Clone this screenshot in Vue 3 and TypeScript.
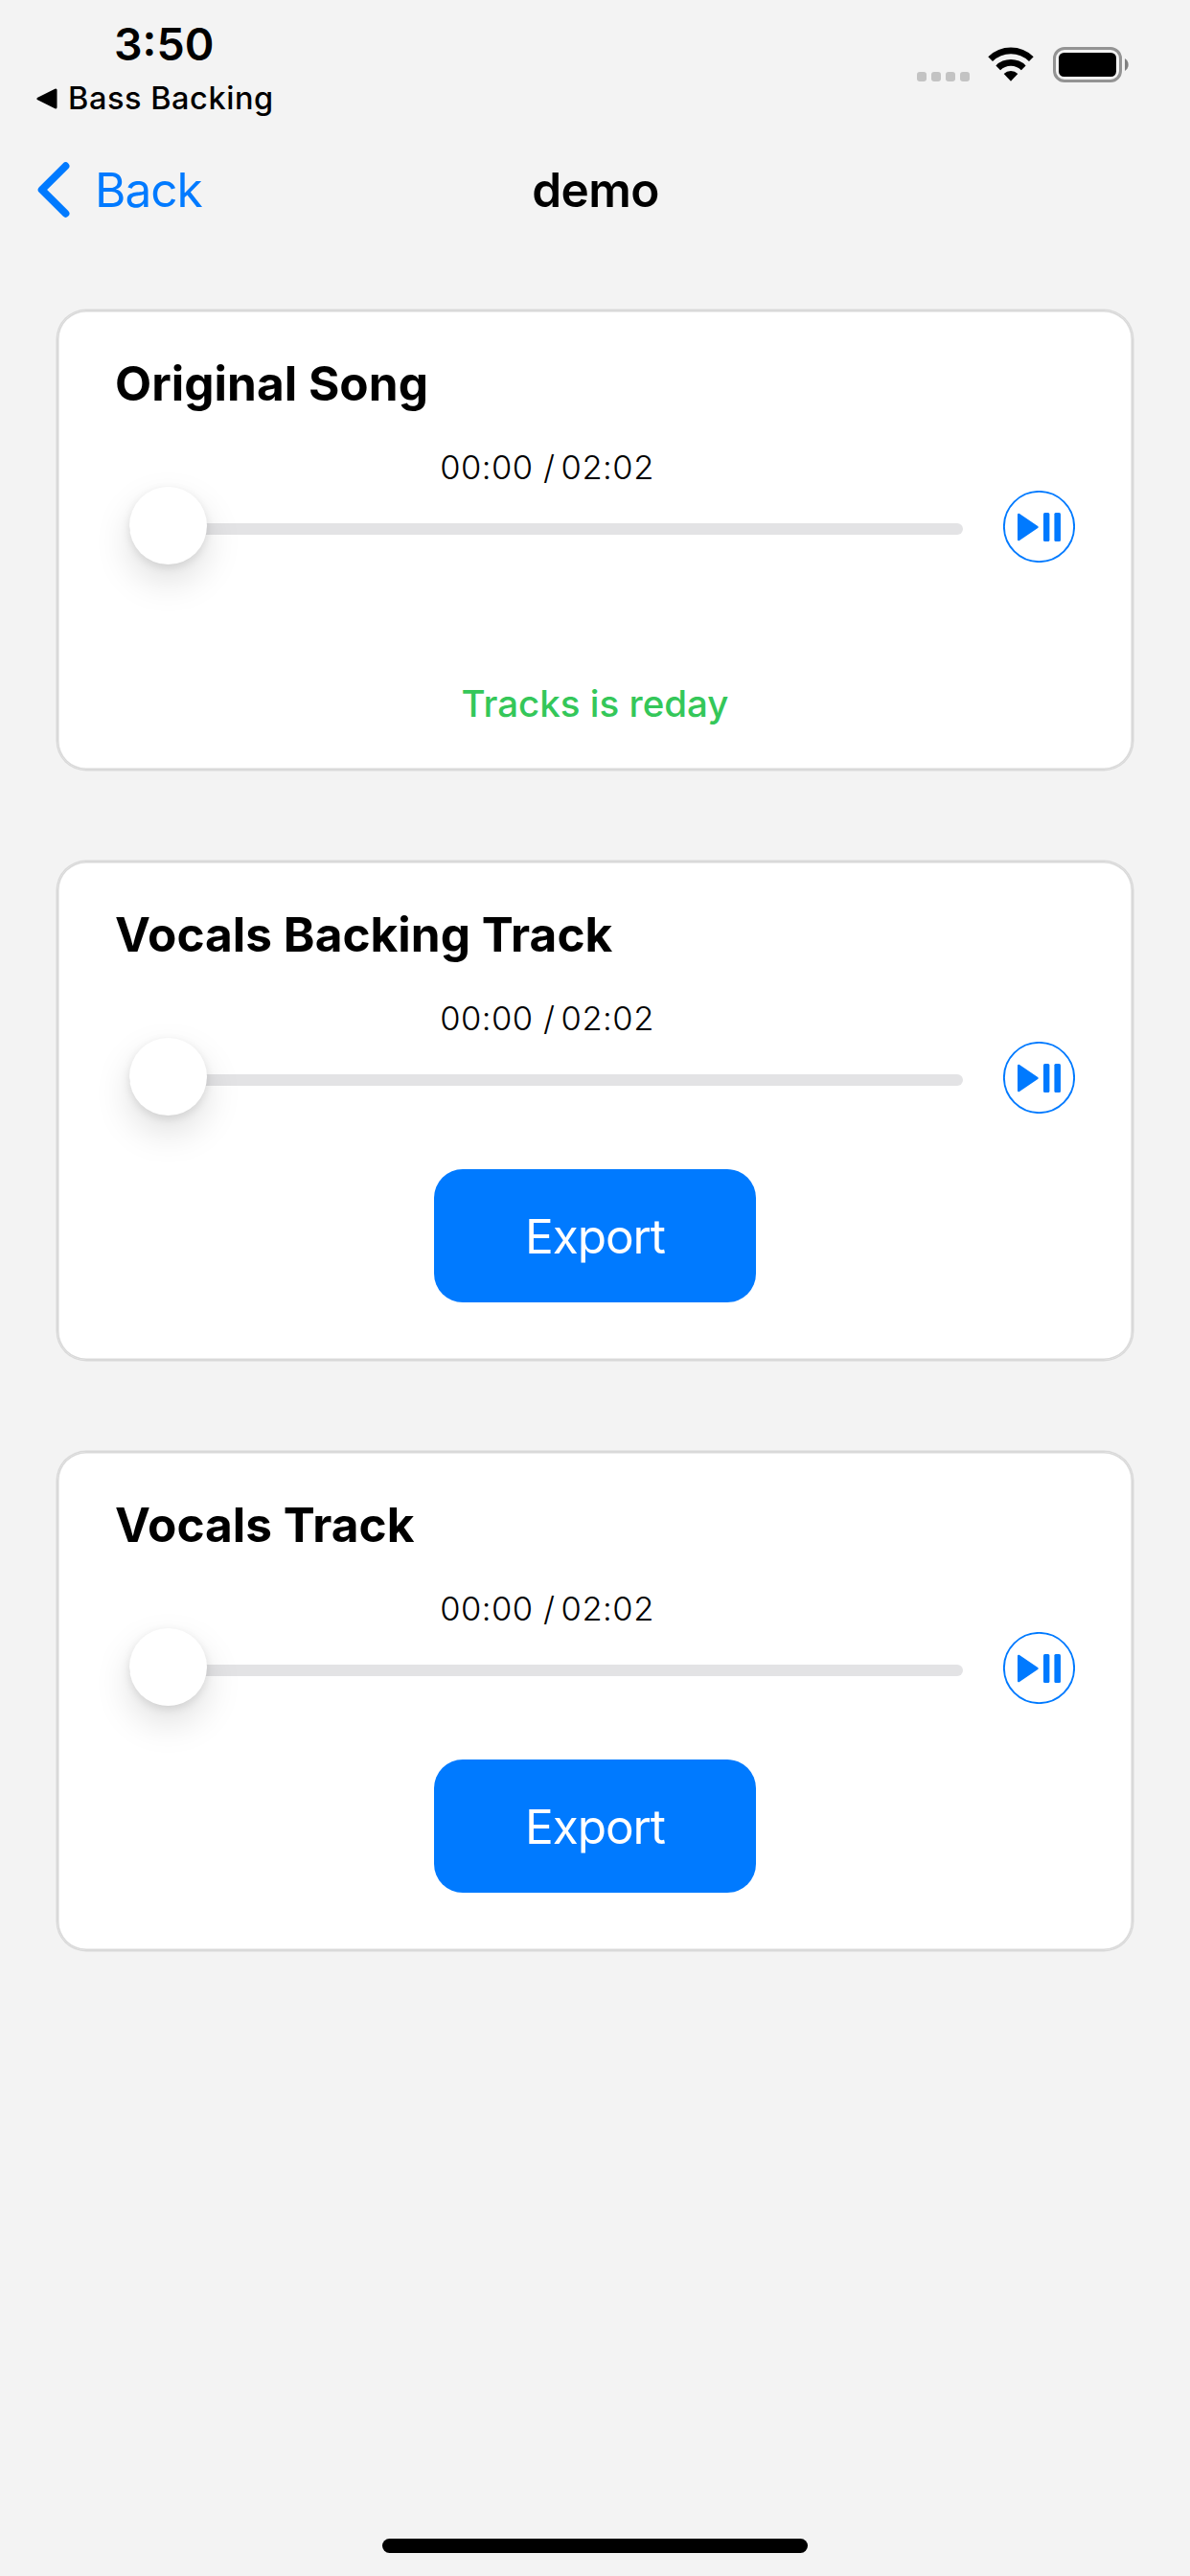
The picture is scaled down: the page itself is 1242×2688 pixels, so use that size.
<script setup lang="ts">
interface Track {
  title: string
  elapsed: string
  duration: string
  status?: string
}

const tracks: Track[] = [
  { title: 'Original Song', elapsed: '00:00', duration: '02:02', status: 'Tracks is reday' },
  { title: 'Vocals Backing Track', elapsed: '00:00', duration: '02:02' },
  { title: 'Vocals Track', elapsed: '00:00', duration: '02:02' },
]
</script>

<template>
  <div class="screen">
    <header class="status-bar">
      <div class="status-left">
        <div class="clock">3:50</div>
        <div class="return-app">
          <svg width="22" height="22" viewBox="0 0 22 22">
            <path d="M2 11 L20 2 V20 Z" stroke="#000" stroke-width="3" stroke-linejoin="round" />
          </svg>
          <span>Bass Backing</span>
        </div>
      </div>
      <div class="status-right">
        <div class="signal"><i v-for="n in 4" :key="n"></i></div>
        <svg class="wifi" width="48" height="36" viewBox="0 0 48 36">
          <path d="M0.3 10.2 A34 34 0 0 1 47.7 10.2 L43 15 A27.3 27.3 0 0 0 5 15 Z" />
          <path d="M8.4 19.4 A22 22 0 0 1 39.6 19.4 L34.9 24.2 A15.4 15.4 0 0 0 13.1 24.2 Z" />
          <path d="M16.7 28.1 A10.4 10.4 0 0 1 31.3 28.1 L24 35.8 Z" />
        </svg>
        <svg width="80" height="38" viewBox="0 0 80 38">
          <rect x="1.5" y="1.5" width="69" height="34" rx="10.5" fill="none" stroke="#939393" stroke-width="3" />
          <rect x="6" y="6" width="60" height="25" rx="5.5" />
          <path d="M75 12 A7.6 7.6 0 0 1 75 25 Z" fill="#808080" />
        </svg>
      </div>
    </header>

    <nav class="nav-bar">
      <a class="back">
        <svg width="34" height="58" viewBox="0 0 34 58">
          <path d="M29.5 4.2 L4.6 29 L29.5 53.8" fill="none" stroke="#007aff" stroke-width="7.8" stroke-linecap="round" stroke-linejoin="round" />
        </svg>
        <span>Back</span>
      </a>
      <h1>demo</h1>
      <span></span>
    </nav>

    <main>
      <section v-for="track in tracks" :key="track.title" class="card" :class="{ compact: track.status }">
        <h2>{{ track.title }}</h2>
        <div class="player">
          <div class="progress">
            <div class="time">{{ track.elapsed }} <span class="slash">/</span> {{ track.duration }}</div>
            <div class="slider">
              <div class="rail"></div>
              <div class="knob"></div>
            </div>
          </div>
          <svg class="toggle" width="75" height="75" viewBox="0 0 75 75">
            <circle cx="37.5" cy="37.5" r="36.6" fill="none" stroke="#007aff" stroke-width="1.9" />
            <path d="M16.3 25 L35.4 38 L16.3 51 Z" fill="#007aff" stroke="#007aff" stroke-width="2.6" stroke-linejoin="round" />
            <rect x="42" y="23" width="6.4" height="30" rx="1.5" fill="#007aff" />
            <rect x="53.4" y="23" width="6.6" height="30" rx="1.5" fill="#007aff" />
          </svg>
        </div>
        <p v-if="track.status" class="ready">{{ track.status }}</p>
        <button v-else class="export"><span>Export</span></button>
      </section>
    </main>

    <footer><div class="home-indicator"></div></footer>
  </div>
</template>

<style>
body {
  margin: 0;
  background: #f3f3f3;
}
</style>

<style scoped>
.screen {
  width: 1242px;
  height: 2688px;
  display: flex;
  flex-direction: column;
  background: #f3f3f3;
  color: #000;
  font-family: Inter, "Liberation Sans", sans-serif;
  overflow: hidden;
}
.status-bar {
  height: 132px;
  display: flex;
  justify-content: space-between;
}
.status-left {
  width: 360px;
}
.clock {
  margin: 16px 0 0 119px;
  font-size: 46.5px;
  line-height: 60px;
  font-weight: 600;
}
.return-app {
  display: flex;
  align-items: center;
  gap: 11px;
  margin: 6px 0 0 38px;
  height: 41px;
  font-size: 32.5px;
  line-height: 41px;
  font-weight: 500;
  letter-spacing: 0.55px;
  white-space: nowrap;
}
.status-right {
  display: flex;
  align-items: flex-start;
  padding: 49px 63px 0 0;
}
.signal {
  display: flex;
  gap: 5px;
  margin: 26px 19px 0 0;
}
.signal i {
  width: 10px;
  height: 10px;
  border-radius: 3px;
  background: #c3c3c3;
}
.wifi {
  margin-right: 20px;
}
.nav-bar {
  height: 132px;
  display: grid;
  grid-template-columns: 1fr auto 1fr;
  align-items: center;
}
.back {
  display: flex;
  align-items: center;
  gap: 26px;
  padding-left: 39px;
  color: #007aff;
  font-size: 49.5px;
  line-height: 60px;
  letter-spacing: -1px;
}
h1 {
  margin: 0;
  padding-left: 1px;
  font-size: 49.5px;
  line-height: 60px;
  font-weight: 600;
  letter-spacing: -0.6px;
}
main {
  flex: 1;
  display: flex;
  flex-direction: column;
  gap: 96px;
  padding: 60px 60px 0;
}
.card {
  box-sizing: border-box;
  height: 520px;
  padding: 46px 60px 0;
  border-radius: 30px;
  background: #fff;
  box-shadow: 0 0 0 1.5px #d9d9d9, inset 0 0 0 1.5px #d9d9d9;
  display: flex;
  flex-direction: column;
}
.card.compact {
  height: 479px;
}
h2 {
  margin: 0;
  font-size: 49.5px;
  line-height: 60px;
  font-weight: 700;
  letter-spacing: 0.05px;
  white-space: nowrap;
}
.player {
  display: flex;
  align-items: flex-end;
  gap: 42px;
  margin: 38px 0 0 15px;
}
.progress {
  width: 870px;
}
.time {
  padding-left: 2px;
  text-align: center;
  font-size: 34.5px;
  line-height: 40px;
  font-weight: 300;
  letter-spacing: 0.5px;
}
.slash {
  margin-right: -4px;
}
.slider {
  position: relative;
  height: 81px;
  display: flex;
  align-items: flex-start;
}
.rail {
  flex: 1;
  height: 12px;
  margin-top: 38px;
  border-radius: 6px;
  background: #e3e3e5;
}
.knob {
  position: absolute;
  left: 0;
  top: 0;
  width: 81px;
  height: 81px;
  border-radius: 50%;
  background: #fff;
  box-shadow: 0 17px 38px rgba(0, 0, 0, 0.13), 0 3px 10px rgba(0, 0, 0, 0.1);
}
.toggle {
  margin-bottom: 2px;
}
.ready {
  margin: 122px 0 0;
  text-align: center;
  color: #34c759;
  font-size: 38.5px;
  line-height: 46px;
  font-weight: 500;
}
.export {
  align-self: center;
  width: 336px;
  height: 139px;
  margin-top: 56px;
  padding: 0;
  border: 0;
  border-radius: 30px;
  background: #007aff;
  color: #fff;
  font-family: inherit;
  font-size: 49.5px;
  line-height: 60px;
  letter-spacing: -1.1px;
}
footer {
  display: flex;
  justify-content: center;
  padding-bottom: 24px;
}
.home-indicator {
  width: 444px;
  height: 15px;
  border-radius: 8px;
  background: #000;
}
</style>
